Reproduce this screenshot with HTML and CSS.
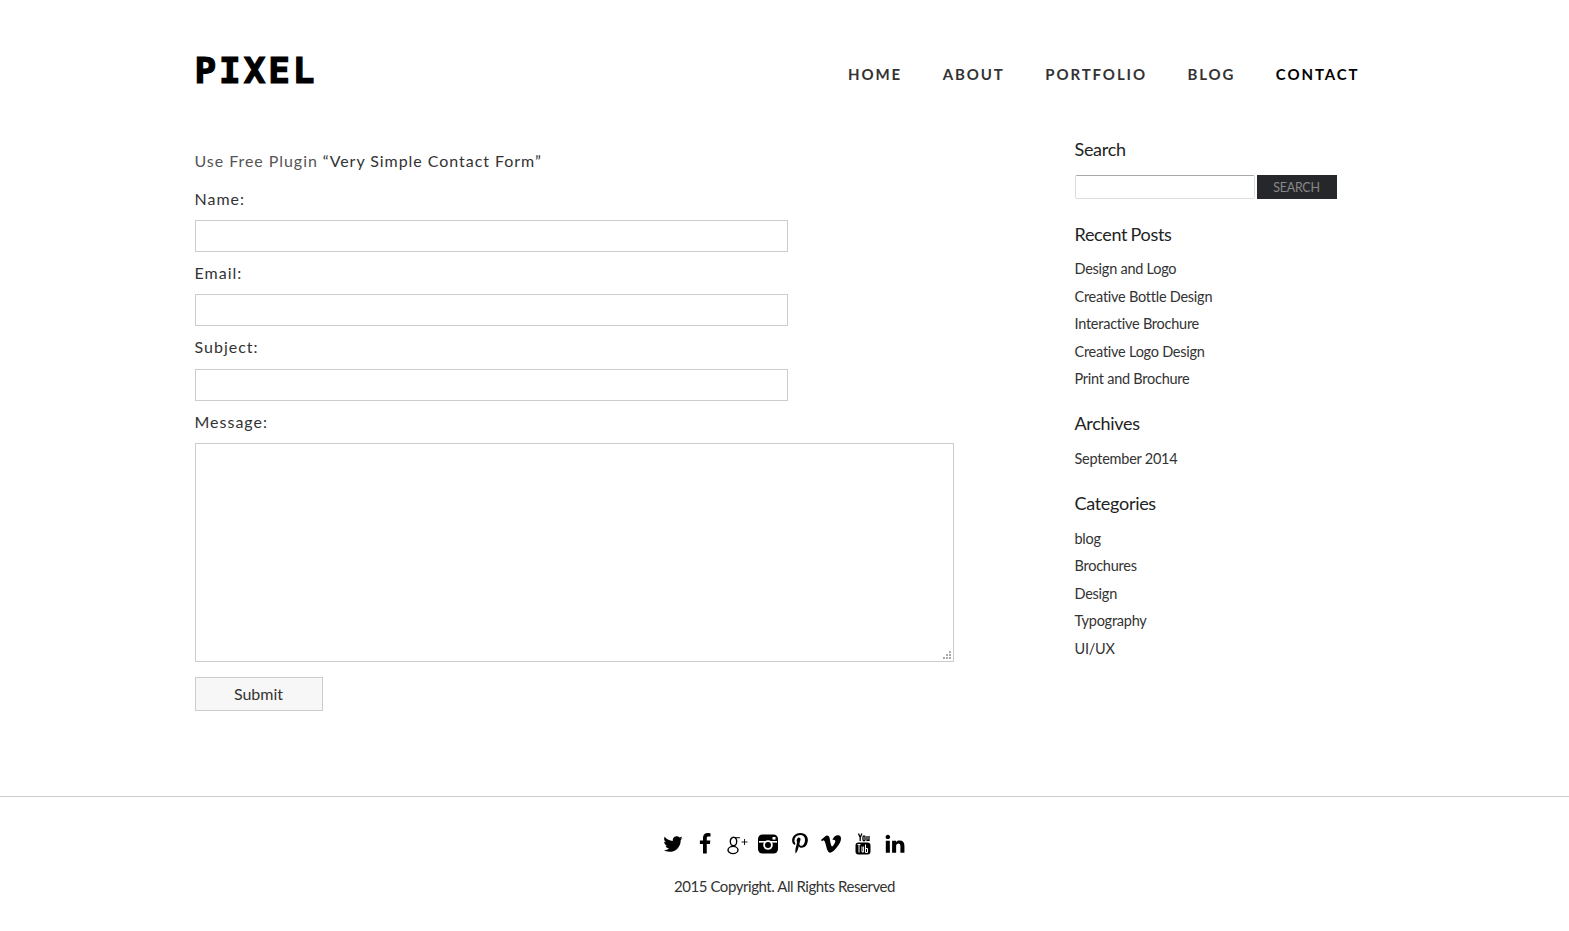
FILE: index.html

```html
<!DOCTYPE html>
<html lang="en">
<head>
<meta charset="UTF-8" />
<meta name="viewport" content="width=device-width, initial-scale=1" />
<title>Pixel - Contact</title>
<link rel="stylesheet" href="styles.css">
</head>
<body>

<header class="site-header">
  <a class="logo" href="#">PIXEL</a>
  <nav class="main-nav">
    <a href="#">Home</a>
    <a href="#">About</a>
    <a href="#">Portfolio</a>
    <a href="#">Blog</a>
    <a class="current" href="#">Contact</a>
  </nav>
</header>

<div class="wrap">
  <main class="content">
    <p class="intro"><span class="muted">Use Free Plugin</span> “Very Simple Contact Form”</p>
    <form class="contact-form">
      <label for="name">Name:</label>
      <input type="text" id="name" />
      <label for="email">Email:</label>
      <input type="text" id="email" />
      <label for="subject">Subject:</label>
      <input type="text" id="subject" />
      <label for="message">Message:</label>
      <textarea id="message"></textarea>
      <button type="button">Submit</button>
    </form>
  </main>

  <aside class="sidebar">
    <h3 class="first">Search</h3>
    <form class="search">
      <input type="text" />
      <button type="button">Search</button>
    </form>

    <h3>Recent Posts</h3>
    <ul>
      <li><a href="#">Design and Logo</a></li>
      <li><a href="#">Creative Bottle Design</a></li>
      <li><a href="#">Interactive Brochure</a></li>
      <li><a href="#">Creative Logo Design</a></li>
      <li><a href="#">Print and Brochure</a></li>
    </ul>

    <h3>Archives</h3>
    <ul>
      <li><a href="#">September 2014</a></li>
    </ul>

    <h3>Categories</h3>
    <ul>
      <li><a href="#">blog</a></li>
      <li><a href="#">Brochures</a></li>
      <li><a href="#">Design</a></li>
      <li><a href="#">Typography</a></li>
      <li><a href="#">UI/UX</a></li>
    </ul>
  </aside>
</div>

<footer class="site-footer">
  <div class="social">
    <a href="#"><svg viewBox="0 0 1792 1792"><path d="M1684 408q-67 98-162 167 1 14 1 42 0 130-38 259.500t-115.500 248.500-184.500 210.500-258 146-323 54.500q-271 0-496-145 35 4 78 4 225 0 401-138-105-2-188-64.500t-114-159.500q33 5 61 5 43 0 85-11-112-23-185.500-111.500t-73.500-205.500v-4q68 38 146 41-66-44-105-115t-39-154q0-88 44-163 121 149 294.500 238.500t371.500 99.500q-8-38-8-74 0-134 94.500-228.500t228.500-94.500q140 0 236 102 109-21 205-78-37 115-142 178 100-11 200-54z"/></svg></a>
    <a href="#"><svg viewBox="0 0 1792 1792"><path d="M1343 12v264h-157q-86 0-116 36t-30 108v189h293l-39 296h-254v759h-306v-759h-255v-296h255v-218q0-186 104-288.500t277-102.500q147 0 228 12z"/></svg></a>
    <a href="#"><svg viewBox="0 0 22 22"><g fill="none" stroke="#000"><ellipse cx="7.500" cy="8.500" rx="3.200" ry="4.300" stroke-width="1.400"/><ellipse cx="7" cy="17" rx="5" ry="3.600" stroke-width="1.400"/><path d="M9 4.800h5M8.500 12.800 5.500 13.800" stroke-width="1.100"/><path d="M18.500 6v6M15.500 9h6" stroke-width=".9"/></g></svg></a>
    <a href="#"><svg viewBox="0 0 22 22"><rect x="1" y="1.500" width="20" height="19" rx="4.500"/><rect x="2" y="8" width="18" height="1.600" fill="#fff"/><circle cx="11" cy="12" r="4.800" fill="#fff"/><circle cx="11" cy="12" r="3"/><rect x="15.500" y="4" width="3" height="2.600" fill="#fff"/></svg></a>
    <a href="#"><svg viewBox="0 0 1792 1792"><path d="M256 597q0-108 37.500-203.500t103.500-166.500 152-123 185-78 202-26q158 0 294 66.500t221 193.500 85 287q0 96-19 188t-60 177-100 149.500-145 103-189 38.500q-68 0-135-32t-96-88q-10 39-28 112.500t-23.500 95-20.500 71-26 71-32 62.500-46 77.500-62 86.500l-14 5-9-10q-15-157-15-188 0-92 21.500-206.500t66.500-287.500 52-203q-32-65-32-169 0-83 52-156t132-73q61 0 95 40.500t34 102.500q0 66-44 191t-44 187q0 63 45 104.500t109 41.500q55 0 102-25t78.500-68 56-95 38-110.500 20-111 6.500-99.500q0-173-109.500-269.500t-285.500-96.500q-200 0-334 129.500t-134 328.500q0 44 12.500 85t27 65 27 45.500 12.500 30.500q0 28-15 73t-37 45q-2 0-17-3-51-15-90.500-56t-61-94.500-32.500-108-11-106.500z"/></svg></a>
    <a href="#"><svg viewBox="0 0 1792 1792"><path d="M1709 518q-10 236-332 651-333 431-562 431-142 0-240-263-44-160-132-482-72-262-157-262-18 0-127 76l-77-98q24-21 108-96.500t130-115.500q156-138 241-146 95-9 153 55.500t81 203.500q44 287 66 373 55 249 120 249 51 0 154-161 101-161 109-246 13-139-109-139-57 0-121 26 120-393 459-382 251 8 236 326z"/></svg></a>
    <a href="#"><svg viewBox="0 0 22 22"><g fill="none" stroke="#000" stroke-width="1.300"><path d="M6.500 .500 8.200 4.500 9.900 .500M8.200 4.500V8"/><rect x="11" y="2.800" width="2" height="5" rx="1"/><path d="M15 3v4.300h2V3"/></g><rect x="3.500" y="9.500" width="15" height="12" rx="3"/><path d="M5.500 11.500h3M7 11.500v8M10 13.500v5.500h1.600v-5.500M13.500 11.500v8h2v-4h-2" fill="none" stroke="#fff" stroke-width="1"/></svg></a>
    <a href="#"><svg viewBox="0 0 1792 1792"><path d="M477 625v991h-330v-991h330zm21-306q1 73-50.500 122t-135.500 49h-2q-82 0-132-49t-50-122q0-74 51.500-122.500t134.500-48.500 133 48.500 51 122.500zm1166 729v568h-329v-530q0-105-40.500-164.500t-126.500-59.500q-63 0-105.500 34.500t-63.500 85.500q-11 30-11 81v553h-329q2-399 2-647t-1-296l-1-48h329v144h-2q20-32 41-56t56.500-52 87-43.500 114.500-15.500q171 0 275 113.500t104 332.500z"/></svg></a>
  </div>
  <p class="copy">2015 Copyright. All Rights Reserved</p>
</footer>

</body>
</html>
```

FILE: styles.css

```css
body { font-family: Lato, sans-serif; margin: 0; padding: 0; background: #fff; color: #333; }
a { color: inherit; text-decoration: none; }

.site-header { display: flex; justify-content: space-between; align-items: flex-start; padding: 49px 209.500px 0 194.500px; height: 88px; }
.logo { font-family: "DejaVu Sans Mono", monospace; font-weight: bold; font-size: 36px; line-height: 44px; letter-spacing: 2.900px; color: #000; -webkit-text-stroke: 1.200px #000; }
.main-nav { display: flex; gap: 40.500px; padding-top: 15px; }
.main-nav a { font-size: 15px; font-weight: bold; line-height: 20px; letter-spacing: 1.900px; text-transform: uppercase; color: #333; }
.main-nav a.current { color: #000; }

.wrap { display: flex; padding-left: 194.500px; height: 659px; }
.content { width: 879.500px; padding-top: 12px; }
.intro { margin: 0 0 14px; font-size: 16px; line-height: 24px; letter-spacing: 0.950px; color: #333; }
.muted { color: #555; }
.contact-form label { display: block; font-size: 16px; line-height: 24px; letter-spacing: 1px; color: #333; margin-bottom: 8.500px; }
.contact-form input { display: block; box-sizing: border-box; width: 593px; height: 32px; margin: 0 0 9.500px; border: 1px solid #ccc; background: #fff; padding: 0; }
.contact-form #subject { margin-top: 9.500px; }
.contact-form textarea { display: block; box-sizing: border-box; width: 759px; height: 219px; margin: 0 0 15px; border: 1px solid #ccc; background: #fff; padding: 0; }
.contact-form textarea::-webkit-resizer {
  background:
    linear-gradient(#aaa, #aaa) 11px 5px / 2px 2px no-repeat,
    linear-gradient(#aaa, #aaa) 11px 8px / 2px 2px no-repeat,
    linear-gradient(#aaa, #aaa) 11px 11px / 2px 2px no-repeat,
    linear-gradient(#aaa, #aaa) 8px 8px / 2px 2px no-repeat,
    linear-gradient(#aaa, #aaa) 8px 11px / 2px 2px no-repeat,
    linear-gradient(#aaa, #aaa) 5px 11px / 2px 2px no-repeat;
}
.contact-form button { display: block; box-sizing: border-box; width: 128px; height: 34px; border: 1px solid #ccc; background: #f7f7f7; font-family: Lato, sans-serif; font-size: 16px; color: #333; padding: 0; }

.sidebar { width: 280px; padding-left: 0.500px; color: #333; }
.sidebar h3 { margin: 18.500px 0 9.500px; font-size: 18px; font-weight: normal; line-height: 24px; letter-spacing: -0.300px; word-spacing: -1px; color: #222; }
.sidebar h3.first { margin: 0 0 14px; }
.sidebar ul { list-style: none; margin: 0; padding: 0; }
.sidebar li { font-size: 14.500px; line-height: 27.600px; letter-spacing: -0.250px; }
.search { display: flex; gap: 2px; margin-bottom: 22.500px; }
.search input { box-sizing: border-box; width: 180px; height: 24px; border: 1px solid #ddd; border-top-color: #aaa; border-radius: 2px; padding: 0; background: #fff; }
.search button { box-sizing: border-box; width: 80px; height: 24px; border: none; background: #26272a; color: #888; font-family: Lato, sans-serif; font-size: 12.500px; letter-spacing: -0.300px; text-transform: uppercase; padding: 0; }

.site-footer { border-top: 1px solid #ccc; text-align: center; padding-top: 36px; height: 99px; }
.social { display: flex; justify-content: center; gap: 9.600px; height: 22px; padding-right: 1px; }
.social a { display: block; width: 22px; height: 22px; }
.social svg { display: block; width: 22px; height: 22px; }
.copy { margin: 21px 0 0; font-size: 15px; line-height: 20px; letter-spacing: -0.450px; color: #333; }
```
